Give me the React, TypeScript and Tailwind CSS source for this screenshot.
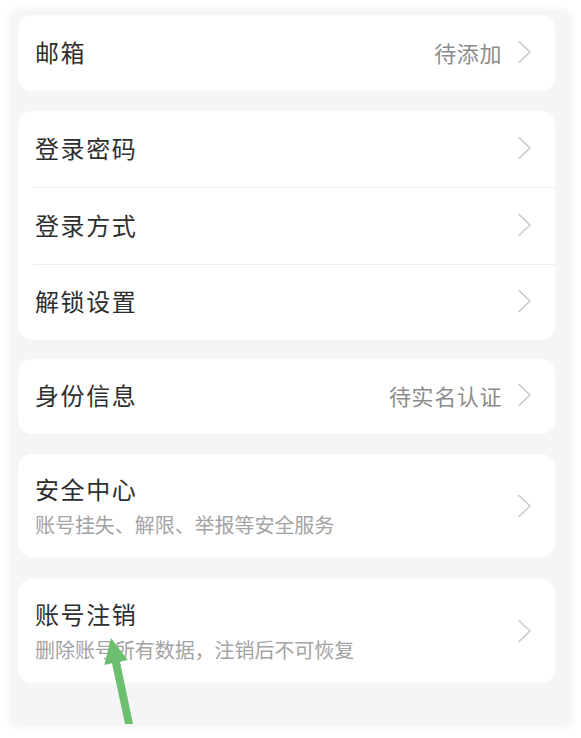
import React from "react";

const font = { fontFamily: '"Noto Sans CJK SC", "Noto Sans", sans-serif' };

function Chevron() {
  return (
    <svg width="15" height="24" viewBox="0 0 15 24" className="shrink-0">
      <path d="M2 1.5 L13 12 L2 22.5" fill="none" stroke="#c9c9c9" strokeWidth="1.6" strokeLinecap="round" strokeLinejoin="round" />
    </svg>
  );
}

function Row({ title, value, h }: { title: string; value?: string; h: string }) {
  return (
    <div className={`flex items-center pl-[17px] pr-[23px] pb-[3px] ${h}`}>
      <div className="flex-1 text-[24px] tracking-[1.6px] text-[#2e2e2e] leading-none">{title}</div>
      {value && <div className="text-[22px] tracking-[0.6px] text-[#8c8c8c] leading-none mr-[15px]">{value}</div>}
      <Chevron />
    </div>
  );
}

function SubRow({ title, sub, h }: { title: string; sub: string; h: string }) {
  return (
    <div className={`flex items-center pl-[17px] pr-[23px] ${h}`}>
      <div className="flex-1 flex flex-col">
        <div className="text-[24px] tracking-[1.6px] text-[#2e2e2e] leading-none">{title}</div>
        <div className="text-[20px] tracking-[-0.05px] text-[#a3a3a3] leading-none mt-[14px]">{sub}</div>
      </div>
      <Chevron />
    </div>
  );
}

export default function App() {
  return (
    <div className="relative w-[581px] h-[738px] bg-white pt-[13px] pl-[13px]" style={font}>
      <div className="w-[555px] h-[711px] bg-[#f5f5f5] shadow-[0_0_10px_rgba(0,0,0,0.10)] pl-[5px] pr-[13px] pt-[2px] flex flex-col">
        <div className="bg-white rounded-[14px]">
          <Row title="邮箱" value="待添加" h="h-[76px]" />
        </div>
        <div className="bg-white rounded-[14px] mt-[20px]">
          <Row title="登录密码" h="h-[76px]" />
          <div className="ml-[15px] h-px bg-[#ededed]" />
          <Row title="登录方式" h="h-[76px]" />
          <div className="ml-[15px] h-px bg-[#ededed]" />
          <Row title="解锁设置" h="h-[75px]" />
        </div>
        <div className="bg-white rounded-[14px] mt-[19px]">
          <Row title="身份信息" value="待实名认证" h="h-[75px]" />
        </div>
        <div className="bg-white rounded-[14px] mt-[20px]">
          <SubRow title="安全中心" sub="账号挂失、解限、举报等安全服务" h="h-[103px]" />
        </div>
        <div className="bg-white rounded-[14px] mt-[22px]">
          <SubRow title="账号注销" sub="删除账号所有数据，注销后不可恢复" h="h-[104px]" />
        </div>
      </div>
      <svg className="absolute left-0 top-0 pointer-events-none" width="581" height="738" viewBox="0 0 581 738">
        <polygon
          points="111,638 127.7,660 120,661.7 133,724 125,724 112,663.3 104.3,665"
          fill="#6cbf6e"
        />
      </svg>
    </div>
  );
}
